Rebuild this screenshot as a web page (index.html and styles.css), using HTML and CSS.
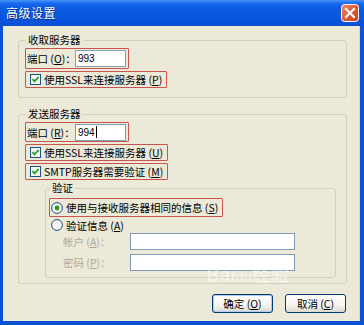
FILE: index.html
```html
<!DOCTYPE html>
<html lang="zh-CN">
<head>
<meta charset="utf-8">
<title>高级设置</title>
<link rel="stylesheet" href="styles.css">
</head>
<body>
<div class="window">
  <div class="titlebar">
    <span class="title">高级设置</span>
    <span class="close">
      <svg width="18" height="18" viewBox="0 0 18 18">
        <defs>
          <linearGradient id="cg" x1="0" y1="0" x2="1" y2="1">
            <stop offset="0" stop-color="#F08A66"/>
            <stop offset="0.5" stop-color="#E05A34"/>
            <stop offset="1" stop-color="#C2401E"/>
          </linearGradient>
        </defs>
        <rect x="0.5" y="0.5" width="17" height="17" rx="3" fill="url(#cg)" stroke="#fff"/>
        <path d="M5 5 L13 13 M13 5 L5 13" stroke="#fff" stroke-width="2.2" stroke-linecap="square"/>
      </svg>
    </span>
  </div>
  <div class="client">
    <fieldset class="group g1">
      <legend>收取服务器</legend>
      <div class="hl port">
        <span class="plabel">端口 (<u>O</u>)：</span>
        <span class="field small">993</span>
      </div>
      <div class="hl check">
        <svg class="cb" width="11" height="11" viewBox="0 0 11 11"><rect x="0.5" y="0.5" width="10" height="10" fill="#F6F6F2" stroke="#1C5180"/><path d="M2.5 5.2 L4.5 7.4 L8.6 3" fill="none" stroke="#21A121" stroke-width="1.8"/></svg>
        <span>使用SSL来连接服务器 (<u>P</u>)</span>
      </div>
    </fieldset>

    <fieldset class="group g2">
      <legend>发送服务器</legend>
      <div class="hl port">
        <span class="plabel">端口 (<u>R</u>)：</span>
        <span class="field small">994<span class="caret"></span></span>
      </div>
      <div class="hl check">
        <svg class="cb" width="11" height="11" viewBox="0 0 11 11"><rect x="0.5" y="0.5" width="10" height="10" fill="#F6F6F2" stroke="#1C5180"/><path d="M2.5 5.2 L4.5 7.4 L8.6 3" fill="none" stroke="#21A121" stroke-width="1.8"/></svg>
        <span>使用SSL来连接服务器 (<u>U</u>)</span>
      </div>
      <div class="hl check">
        <svg class="cb" width="11" height="11" viewBox="0 0 11 11"><rect x="0.5" y="0.5" width="10" height="10" fill="#F6F6F2" stroke="#1C5180"/><path d="M2.5 5.2 L4.5 7.4 L8.6 3" fill="none" stroke="#21A121" stroke-width="1.8"/></svg>
        <span>SMTP服务器需要验证 (<u>M</u>)</span>
      </div>

      <fieldset class="group g3">
        <legend>验证</legend>
        <div class="hl radio">
          <svg class="rb" width="12" height="12" viewBox="0 0 12 12"><circle cx="6" cy="6" r="5.4" fill="#F6F6F2" stroke="#1C5180"/><circle cx="6" cy="6" r="2.4" fill="#21A121"/></svg>
          <span>使用与接收服务器相同的信息 (<u>S</u>)</span>
        </div>
        <div class="radio plain">
          <svg class="rb" width="12" height="12" viewBox="0 0 12 12"><circle cx="6" cy="6" r="5.4" fill="#F6F6F2" stroke="#1C5180"/></svg>
          <span>验证信息 (<u>A</u>)</span>
        </div>
        <div class="cred">
          <span class="clabel">帐户 (<u>A</u>)：</span>
          <span class="field wide"></span>
        </div>
        <div class="cred second">
          <span class="clabel">密码 (<u>P</u>)：</span>
          <span class="field wide"></span>
        </div>
      </fieldset>
    </fieldset>

    <div class="buttons">
      <span class="btn default">确定 (<u>O</u>)</span>
      <span class="btn">取消 (<u>C</u>)</span>
    </div>
    <div class="watermark">Bai<span class="paw">du</span>经验</div>
  </div>
</div>
</body>
</html>
```

FILE: styles.css
```css
* { box-sizing: border-box; }
body {
  margin: 0;
  font-family: "Noto Sans CJK SC", "Liberation Sans", sans-serif;
  font-size: 10.5px;
  color: #000;
}
u { text-decoration: underline; text-underline-offset: 1px; }

.window {
  width: 364px;
  height: 325px;
  display: flex;
  flex-direction: column;
  background: #0A4FD8;
}

.titlebar {
  height: 26px;
  flex: none;
  display: flex;
  align-items: center;
  justify-content: space-between;
  padding: 0 5px 0 6px;
  background: linear-gradient(#4A97F8 0, #1E6CEE 3px, #0B5DE3 7px, #0856DD 17px, #0752D8 24px, #0A4BCB 26px);
}
.title {
  color: #fff;
  font-size: 12px;
  line-height: 14px;
  letter-spacing: 0.5px;
  text-shadow: 1px 1px 0 #0A2E8A;
}
.close { display: flex; }

.client {
  flex: 1;
  position: relative;
  background: #ECE9D8;
  border-left: 3px solid #0A4ED5;
  border-right: 4px solid #0E52D6;
  border-bottom: 4px solid #0C50D4;
  padding-top: 8px;
  box-shadow: inset -1px 0 0 #C9D7F2;
}

.group {
  border: 1px solid #D0D0BF;
  border-radius: 3px;
  margin: 0 13px 0 15px;
  padding: 0 6px 9px 6px;
  min-width: 0;
}
.group legend {
  padding: 0 2px;
  margin-left: 1px;
  line-height: 12px;
  font-size: 10.5px;
}
.g2 { margin-top: 10px; padding-bottom: 5px; }
.g3 {
  margin: 2px 4px 0 20px;
  padding: 0 3px 6px 3px;
}

.hl {
  display: flex;
  align-items: center;
  width: fit-content;
  border: 1px solid #C9534D;
  border-radius: 1px;
}
.port {
  height: 21px;
  margin-top: 2px;
  padding: 0 2px 0 1px;
}
.g2 .port { height: 20px; }
.plabel { width: 48px; white-space: nowrap; }

.field {
  display: flex;
  align-items: center;
  height: 17px;
  background: #fff;
  border: 1px solid #7F9DB9;
  padding-left: 2px;
  font-family: "Liberation Sans", sans-serif;
  font-size: 10px;
}
.field.small { width: 51px; }
.field.wide { width: 165px; }
.caret {
  display: inline-block;
  width: 1px;
  height: 12px;
  background: #000;
  margin-left: 1px;
}

.check {
  height: 17px;
  margin-top: 2px;
  padding: 0 4px 0 4px;
}
.cb { margin-right: 3px; flex: none; }

.radio {
  display: flex;
  align-items: center;
}
.radio.hl {
  height: 19px;
  margin-top: 4px;
  padding: 0 4px 0 1px;
}
.rb { margin-right: 3px; flex: none; }
.radio.plain {
  height: 14px;
  margin-top: 1px;
  padding-left: 2px;
}

.cred {
  display: flex;
  align-items: center;
  margin-top: 1px;
  padding-left: 14px;
}
.cred.second { margin-top: 4px; }
.clabel { width: 67px; color: #ACA899; white-space: nowrap; }

.buttons {
  display: flex;
  justify-content: flex-end;
  gap: 12px;
  margin: 10px 14px 0 0;
}
.btn {
  width: 61px;
  height: 19px;
  display: flex;
  align-items: center;
  justify-content: center;
  border: 1px solid #003C74;
  border-radius: 3px;
  background: linear-gradient(#FFFFFF, #F4F3EE 60%, #DCD8CC);
}
.btn.default {
  box-shadow: inset 0 0 0 1px #B3CBF2;
}

.watermark {
  position: absolute;
  left: 204px;
  top: 240px;
  font-family: "Liberation Sans", sans-serif;
  font-size: 18px;
  line-height: 18px;
  color: rgba(255, 255, 255, 0.6);
  letter-spacing: 1px;
  pointer-events: none;
}
.paw { font-size: 13px; }
```
